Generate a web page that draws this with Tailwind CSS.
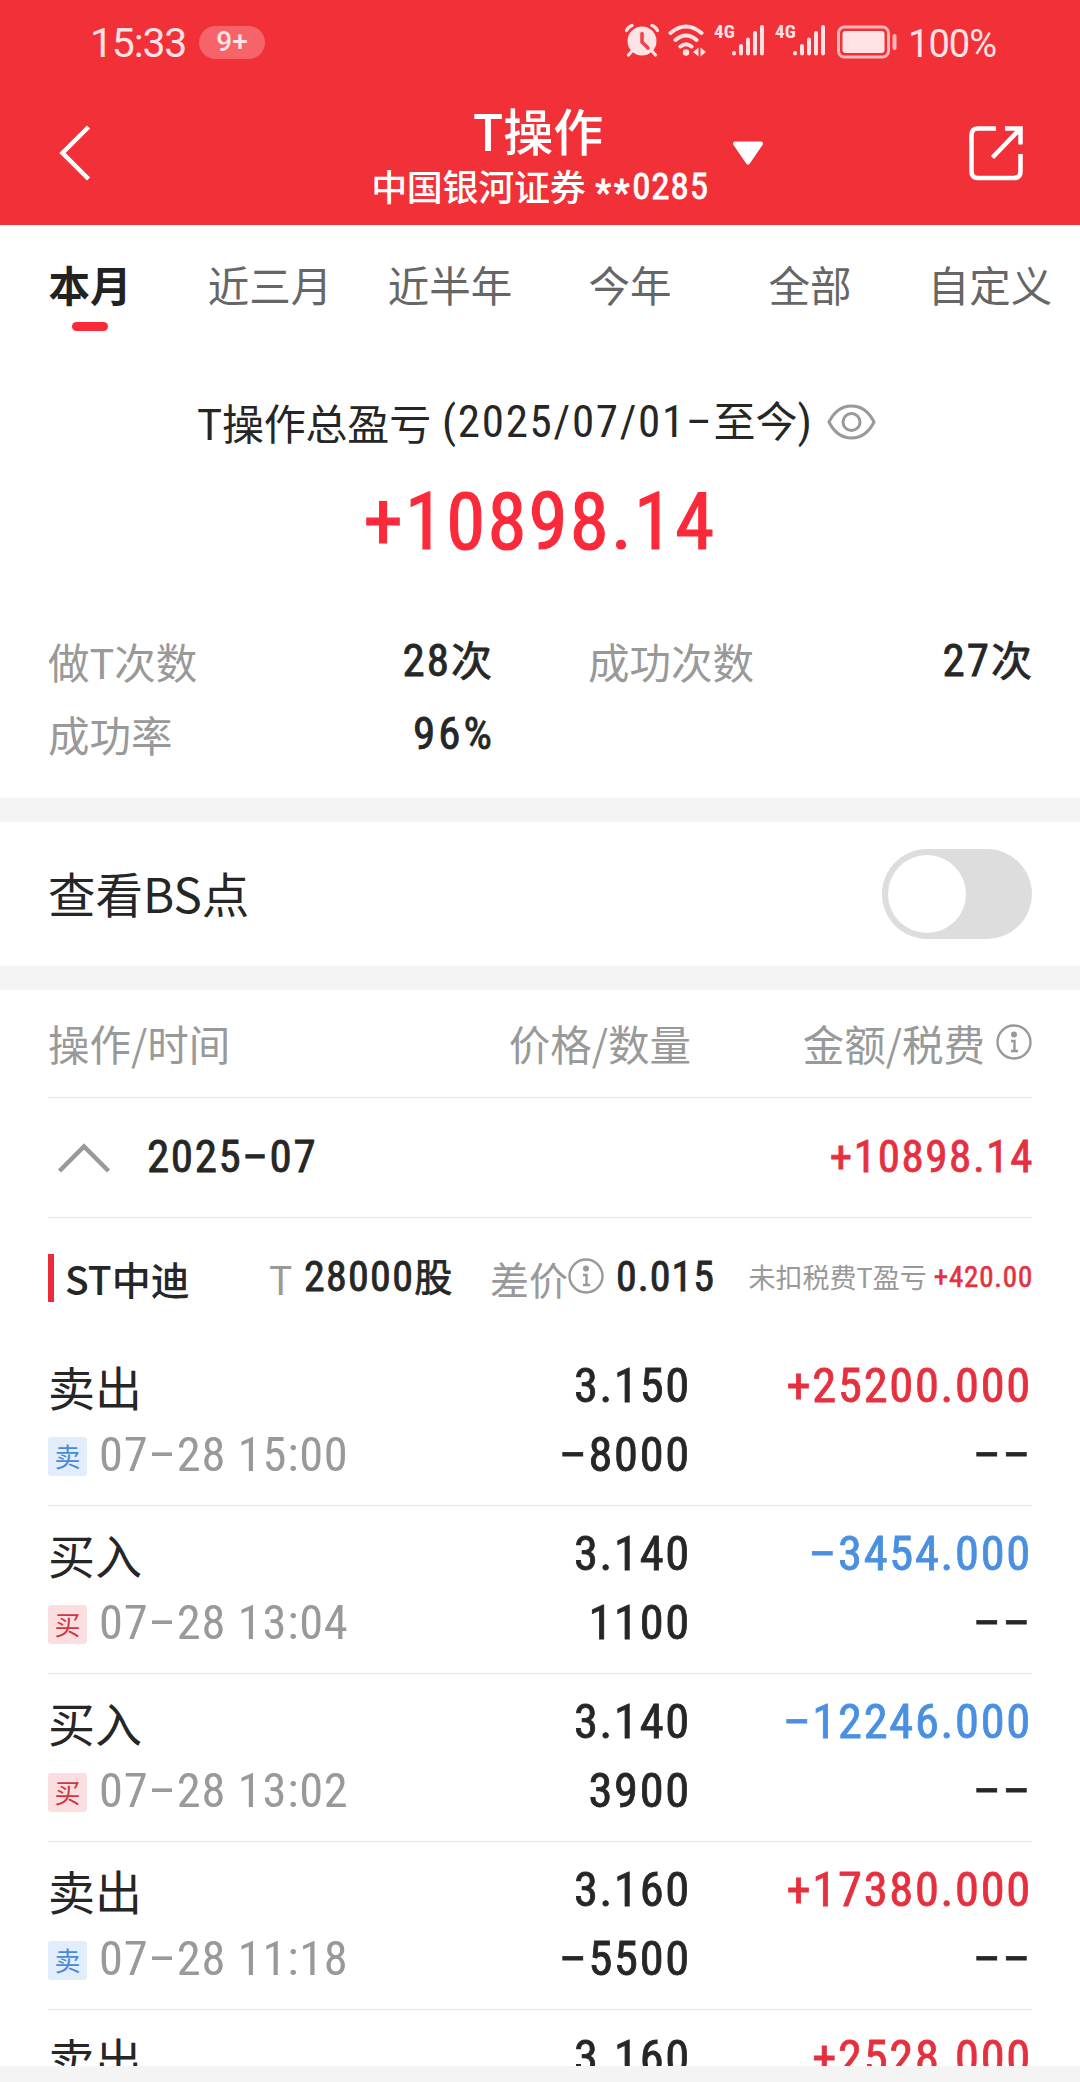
<!DOCTYPE html>
<html lang="zh-CN">
<head>
    <meta charset="UTF-8">
    <meta name="viewport" content="width=device-width, initial-scale=1.0">
    <title>T操作</title>
    <script src="https://cdn.jsdelivr.net/npm/@tailwindcss/browser@4"></script>
</head>
<body class="w-[1080px] h-[2082px] overflow-hidden flex flex-col bg-[#f4f4f4] text-[#262626] font-['Noto_Sans_CJK_SC',sans-serif]">

    <!-- Header -->
    <header class="h-[225px] shrink-0 bg-[#f23038] text-white">
        <!-- Status bar -->
        <div class="h-[84px] flex items-center pl-[90px] pr-[84px] text-[#ffe2e3] font-['Roboto',sans-serif]">
            <span class="w-[109px] text-[41px] leading-none tracking-[-1.2px] pt-[3px]">15:33</span>
            <span class="w-[66px] h-[33px] rounded-full bg-[#f6646a] flex items-center justify-center text-[28px] leading-none font-medium">9+</span>
            <div class="ml-auto flex items-center">
                <svg class="w-[34px] h-[34px] mr-[9px] -mt-1" viewBox="0 0 34 34" fill="none">
                    <circle cx="17" cy="18" r="14.5" fill="currentColor"/>
                    <path d="M17 10.500v8.500l6 6" stroke="#f0444b" stroke-width="3.600" stroke-linecap="round" stroke-linejoin="round"/>
                    <path d="M1.500 7.500Q3 4 7 2.500M27 2.500Q31 4 32.500 7.500M7 28l-3.500 4M27 28l3.500 4" stroke="currentColor" stroke-width="3.200" stroke-linecap="round"/>
                </svg>
                <svg class="w-[38px] h-[34px] mr-[8px] -mt-1" viewBox="0 0 38 34" fill="none" stroke="currentColor" stroke-width="4" stroke-linecap="round">
                    <path d="M2.500 10Q18 -3 33.500 10M7.500 17Q18 8 28.500 17M12.500 23.500Q18 19 23.500 23.500"/>
                    <circle cx="18" cy="29.500" r="3.200" fill="currentColor" stroke="none"/>
                    <path d="M30.500 24.500v9l-5.500-4.500zM32.500 24.500v9l5.500-4.500z" fill="currentColor" stroke="none"/>
                </svg>
                <div class="flex w-[61px] h-[34px] -mt-1">
                    <span class="w-[17px] text-[19px] leading-[17px] font-['Roboto_Condensed'] font-bold">4G</span>
                    <svg class="w-[33px] h-[34px]" viewBox="0 0 33 34" stroke="currentColor" stroke-width="4" stroke-linecap="round">
                        <path d="M3 30v.5M10 23v7.500M17 16.500v14M24 10v20.500M31 4v26.500"/>
                    </svg>
                </div>
                <div class="flex w-[62px] h-[34px] -mt-1">
                    <span class="w-[17px] text-[19px] leading-[17px] font-['Roboto_Condensed'] font-bold">4G</span>
                    <svg class="w-[33px] h-[34px]" viewBox="0 0 33 34" stroke="currentColor" stroke-width="4" stroke-linecap="round">
                        <path d="M3 30v.5M10 23v7.500M17 16.500v14M24 10v20.500M31 4v26.500"/>
                    </svg>
                </div>
                <svg class="w-[61px] h-[34px] mr-[10px]" viewBox="0 0 61 34" fill="none">
                    <rect x="1.500" y="2" width="50" height="30" rx="6" stroke="#fab5b8" stroke-width="3"/>
                    <rect x="5.500" y="6" width="42" height="22" rx="3" fill="currentColor"/>
                    <path d="M57.500 11v12" stroke="#fab5b8" stroke-width="4" stroke-linecap="round"/>
                </svg>
                <span class="text-[38px] leading-none tracking-[-1px] pt-[3px]">100%</span>
            </div>
        </div>
        <!-- Title bar -->
        <div class="h-[141px] grid grid-cols-[233px_1fr_233px]">
            <svg class="w-[32px] h-[56px] ml-[59px] mt-[41px]" viewBox="0 0 32 56" fill="none" stroke="currentColor" stroke-width="4.500">
                <path d="M29.500 2L3.500 28L29.500 54"/>
            </svg>
            <div class="relative flex flex-col items-center">
                <h1 class="h-[66px] mt-[12px] mr-[4px] text-[50px] leading-[66px] font-medium">T操作</h1>
                <p class="h-[42px] mt-[2px] flex items-center gap-[10px] text-[36px] leading-[42px] font-medium">
                    <span class="tracking-[-0.3px]">中国银河证券</span>
                    <span class="pt-[4px] font-['Roboto_Condensed'] font-normal [-webkit-text-stroke:0.8px] text-[37px] tracking-[0.9px]"><span class="inline-block translate-y-[6px] tracking-[2.5px]">**</span>0285</span>
                </p>
                <svg class="absolute left-[499px] top-[56px] w-[32px] h-[26px]" viewBox="0 0 32 26" fill="currentColor" stroke="currentColor" stroke-width="4" stroke-linejoin="round">
                    <path d="M3 3.500H29L16 22.500Z"/>
                </svg>
            </div>
            <svg class="w-[56px] h-[56px] ml-[121px] mt-[41px]" viewBox="0 0 56 56" fill="none" stroke="currentColor" stroke-width="4.500">
                <path d="M28 3.500H10Q3.500 3.500 3.500 10V46.500Q3.500 53 10 53H46Q52.500 53 52.500 46.500V29"/>
                <path d="M37 3.500H52.500V19.500M52 4L24.500 32.500"/>
            </svg>
        </div>
    </header>

    <!-- Summary -->
    <section class="h-[573px] shrink-0 bg-white">
        <nav class="grid grid-cols-6 h-[106px] pt-[27px] text-center text-[41.500px] leading-[64px] text-[#666]">
            <a class="font-bold text-[#222] flex flex-col items-center">本月<i class="w-9 h-[9px] mt-[6px] rounded-full bg-[#fa2a3b]"></i></a>
            <a>近三月</a>
            <a>近半年</a>
            <a>今年</a>
            <a>全部</a>
            <a>自定义</a>
        </nav>

        <div class="h-[60px] mt-[61px] pl-[197px] flex items-center text-[42px] leading-[60px]">
            <span class="w-[245px] tracking-[-0.2px] whitespace-nowrap">T操作总盈亏</span>
            <span class="w-[385px] font-['Roboto_Condensed','Noto_Sans_CJK_SC'] text-[45px] tracking-[1.7px] whitespace-nowrap">(2025/07/01–<span class="text-[42px] tracking-normal">至今</span>)</span>
            <svg class="w-[49px] h-[36px]" viewBox="0 0 49 36" fill="none" stroke="#999" stroke-width="3">
                <path d="M2 18Q10 2 24.500 2T47 18Q39 34 24.500 34T2 18Z"/>
                <circle cx="24.500" cy="18" r="8.500"/>
            </svg>
        </div>

        <p class="h-[80px] mt-[30px] text-center font-['Roboto_Condensed'] [-webkit-text-stroke:1.2px] text-[79px] leading-[80px] tracking-[2.2px] text-[#fa2a3b]">+10898.14</p>

        <dl class="mt-[63px] px-12 grid grid-cols-2 gap-x-24 text-[41.500px] leading-[72px]">
            <div class="flex justify-between">
                <dt class="text-[#999]">做T次数</dt>
                <dd class="font-['Roboto_Condensed','Noto_Sans_CJK_SC'] [-webkit-text-stroke:0.8px] text-[45px] tracking-[2px]">28<span class="text-[41px] tracking-normal">次</span></dd>
            </div>
            <div class="flex justify-between">
                <dt class="text-[#999]">成功次数</dt>
                <dd class="font-['Roboto_Condensed','Noto_Sans_CJK_SC'] [-webkit-text-stroke:0.8px] text-[45px] tracking-[2px]">27<span class="text-[41px] tracking-normal">次</span></dd>
            </div>
            <div class="flex justify-between">
                <dt class="text-[#999]">成功率</dt>
                <dd class="-mr-[3px] font-['Roboto_Condensed','Noto_Sans_CJK_SC'] [-webkit-text-stroke:0.8px] text-[45px] tracking-[3px]">96%</dd>
            </div>
        </dl>
    </section>

    <!-- BS switch -->
    <section class="h-36 mt-6 shrink-0 bg-white px-12 flex items-center justify-between">
        <span class="text-[47.500px] -mt-[2px]">查看BS点</span>
        <button class="w-[150px] h-[90px] p-[6px] rounded-full bg-[#ddd]"><span class="block w-[78px] h-[78px] rounded-full bg-white"></span></button>
    </section>

    <!-- Records -->
    <main class="h-[1076px] mt-6 mb-4 shrink-0 bg-white px-12 overflow-hidden">
        <div class="h-[108px] grid grid-cols-[1fr_243px_341px] items-center border-b border-[#e6e6e6] text-[41.500px] text-[#999]">
            <span>操作/时间</span>
            <span class="text-right">价格/数量</span>
            <span class="flex items-center justify-end gap-[11px]">金额/税费
                <svg class="w-9 h-9 -mt-1" viewBox="0 0 36 36" fill="none" stroke="#999" stroke-width="2.400">
                    <circle cx="18" cy="18" r="16.500"/>
                    <circle cx="18" cy="10.500" r="3" fill="#999" stroke="none"/>
                    <path d="M15 17H18.500V27M15 27H22"/>
                </svg>
            </span>
        </div>

        <div class="h-[120px] flex items-center border-b border-[#e6e6e6] font-['Roboto_Condensed'] text-[45px] leading-[64px] [-webkit-text-stroke:0.8px]">
            <svg class="w-[54px] h-[30px] ml-[9px] mr-[36px]" viewBox="0 0 54 30" fill="none" stroke="#999" stroke-width="4.500">
                <path d="M2.500 28L27 3.500L51.500 28"/>
            </svg>
            <span class="-mt-[2px] tracking-[1.6px]">2025–07</span>
            <span class="-mt-[2px] ml-auto -mr-[2px] tracking-[1.6px] text-[#e5303f]">+10898.14</span>
        </div>

        <div class="h-[120px] flex items-center text-[39px] leading-[60px] whitespace-nowrap">
            <i class="w-[6px] h-12 bg-[#ee2b3c]"></i>
            <span class="w-[204px] pl-[11px] font-medium">ST中迪</span>
            <span class="w-[46px] pl-[11px] text-[#999]">T</span>
            <span class="w-[186px] -mt-[2px] font-['Roboto_Condensed','Noto_Sans_CJK_SC'] [-webkit-text-stroke:0.8px] text-[42px] tracking-[1.3px]">28000<span class="text-[38px] tracking-normal">股</span></span>
            <span class="w-[78px] text-[#999]">差价</span>
            <svg class="w-9 h-9 -mt-1 mr-[12px]" viewBox="0 0 36 36" fill="none" stroke="#999" stroke-width="2.400">
                <circle cx="18" cy="18" r="16.500"/>
                <circle cx="18" cy="10.500" r="3" fill="#999" stroke="none"/>
                <path d="M15 17H18.500V27M15 27H22"/>
            </svg>
            <span class="-mt-[2px] font-['Roboto_Condensed'] [-webkit-text-stroke:0.8px] text-[42px] tracking-[1px]">0.015</span>
            <span class="ml-auto -mt-[2px] text-[27px] text-[#999] mr-[7px]">未扣税费T盈亏</span>
            <span class="-mt-[2px] -mr-[1px] font-['Roboto_Condensed'] [-webkit-text-stroke:0.6px] text-[29px] tracking-[0.8px] text-[#e5303f]">+420.00</span>
        </div>

        <div id="record-list"></div>
    </main>

    <script>
        const records = [
            { type: 'sell', time: '07–28 15:00', price: '3.150', count: '–8000', amount: '+25200.000' },
            { type: 'buy', time: '07–28 13:04', price: '3.140', count: '1100', amount: '–3454.000' },
            { type: 'buy', time: '07–28 13:02', price: '3.140', count: '3900', amount: '–12246.000' },
            { type: 'sell', time: '07–28 11:18', price: '3.160', count: '–5500', amount: '+17380.000' },
            { type: 'sell', price: '3.160', amount: '+2528.000' },
        ];

        const list = document.getElementById('record-list');

        records.forEach((item) => {
            const sell = item.type === 'sell';
            const row = document.createElement('div');
            row.className = 'h-[168px] pt-[12px] grid grid-cols-[1fr_243px_341px] grid-rows-[70px_69px] items-center border-b border-[#e6e6e6] text-[48.500px] leading-[69px] text-right tracking-[1.7px]';

            row.innerHTML = `
                <span class="text-left text-[47px] tracking-normal">${sell ? '卖出' : '买入'}</span>
                <span class="font-['Roboto_Condensed'] [-webkit-text-stroke:0.8px]">${item.price}</span>
                <span class="font-['Roboto_Condensed'] [-webkit-text-stroke:0.8px] ${sell ? 'text-[#e5303f]' : 'text-[#4a8fe0]'}">${item.amount}</span>
            `;

            if (item.time) {
                row.innerHTML += `
                    <span class="flex items-center">
                        <i class="w-[39px] h-[39px] mt-[3px] mr-[12px] rounded-[3px] flex items-center justify-center not-italic text-[26px] leading-none tracking-normal ${sell ? 'bg-[#e1edfb] text-[#4a8ad4]' : 'bg-[#fbdfe0] text-[#d0383f]'}">${sell ? '卖' : '买'}</i>
                        <span class="font-['Roboto_Condensed'] text-[#999] tracking-[0.7px]">${item.time}</span>
                    </span>
                    <span class="font-['Roboto_Condensed'] [-webkit-text-stroke:0.8px]">${item.count}</span>
                    <span class="font-['Roboto_Condensed'] [-webkit-text-stroke:0.8px]">––</span>
                `;
            }
            list.appendChild(row);
        });
    </script>
</body>
</html>
